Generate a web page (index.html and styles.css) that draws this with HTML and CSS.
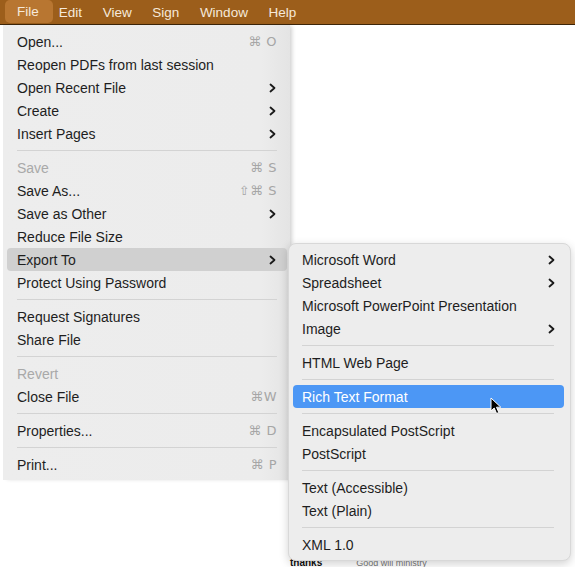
FILE: index.html
```html
<!DOCTYPE html>
<html>
<head>
<meta charset="utf-8">
<link rel="stylesheet" href="styles.css">
</head>
<body>
<div class="menubar">
  <span class="mb-item active">File</span>
  <span class="mb-item">Edit</span>
  <span class="mb-item">View</span>
  <span class="mb-item">Sign</span>
  <span class="mb-item">Window</span>
  <span class="mb-item">Help</span>
</div>
<div class="stage">
  <div class="doc">
    <span class="doc-big">thanks</span>
    <span class="doc-small">Good will ministry</span>
  </div>

  <div class="menu main">
    <div class="row"><span>Open...</span><span class="sc">⌘ O</span></div>
    <div class="row"><span>Reopen PDFs from last session</span></div>
    <div class="row"><span>Open Recent File</span><svg class="chev" viewBox="0 0 7 10"><polyline points="1.5,1.5 5.5,5 1.5,8.5"/></svg></div>
    <div class="row"><span>Create</span><svg class="chev" viewBox="0 0 7 10"><polyline points="1.5,1.5 5.5,5 1.5,8.5"/></svg></div>
    <div class="row"><span>Insert Pages</span><svg class="chev" viewBox="0 0 7 10"><polyline points="1.5,1.5 5.5,5 1.5,8.5"/></svg></div>
    <div class="sep"></div>
    <div class="row dis"><span>Save</span><span class="sc">⌘ S</span></div>
    <div class="row"><span>Save As...</span><span class="sc">⇧⌘ S</span></div>
    <div class="row"><span>Save as Other</span><svg class="chev" viewBox="0 0 7 10"><polyline points="1.5,1.5 5.5,5 1.5,8.5"/></svg></div>
    <div class="row"><span>Reduce File Size</span></div>
    <div class="row hover"><span>Export To</span><svg class="chev" viewBox="0 0 7 10"><polyline points="1.5,1.5 5.5,5 1.5,8.5"/></svg></div>
    <div class="row"><span>Protect Using Password</span></div>
    <div class="sep"></div>
    <div class="row"><span>Request Signatures</span></div>
    <div class="row"><span>Share File</span></div>
    <div class="sep"></div>
    <div class="row dis"><span>Revert</span></div>
    <div class="row"><span>Close File</span><span class="sc">⌘W</span></div>
    <div class="sep"></div>
    <div class="row"><span>Properties...</span><span class="sc">⌘ D</span></div>
    <div class="sep"></div>
    <div class="row"><span>Print...</span><span class="sc">⌘ P</span></div>
  </div>

  <div class="menu sub">
    <div class="row"><span>Microsoft Word</span><svg class="chev" viewBox="0 0 7 10"><polyline points="1.5,1.5 5.5,5 1.5,8.5"/></svg></div>
    <div class="row"><span>Spreadsheet</span><svg class="chev" viewBox="0 0 7 10"><polyline points="1.5,1.5 5.5,5 1.5,8.5"/></svg></div>
    <div class="row"><span>Microsoft PowerPoint Presentation</span></div>
    <div class="row"><span>Image</span><svg class="chev" viewBox="0 0 7 10"><polyline points="1.5,1.5 5.5,5 1.5,8.5"/></svg></div>
    <div class="sep"></div>
    <div class="row"><span>HTML Web Page</span></div>
    <div class="sep"></div>
    <div class="row sel"><span>Rich Text Format</span>
      <svg class="cursor" viewBox="0 0 12 18"><path d="M1 1 L1 14 L4.2 11 L6.6 16.5 L8.8 15.5 L6.5 10.2 L10.8 10.2 Z" fill="#000" stroke="#fff" stroke-width="1"/></svg>
    </div>
    <div class="sep"></div>
    <div class="row"><span>Encapsulated PostScript</span></div>
    <div class="row"><span>PostScript</span></div>
    <div class="sep"></div>
    <div class="row"><span>Text (Accessible)</span></div>
    <div class="row"><span>Text (Plain)</span></div>
    <div class="sep"></div>
    <div class="row"><span>XML 1.0</span></div>
  </div>
</div>
</body>
</html>
```
FILE: styles.css
```css
* { box-sizing: border-box; }
html, body { margin: 0; padding: 0; background: #fff; }
body {
  width: 575px;
  height: 567px;
  overflow: hidden;
  font-family: "Liberation Sans", Arial, sans-serif;
  font-size: 14px;
  color: #1e1e1e;
}
.menubar {
  height: 25px;
  background: #9c5e1b;
  border-bottom: 1px solid #3e2508;
  display: flex;
  align-items: stretch;
  padding-left: 5px;
}
.mb-item {
  display: flex;
  align-items: center;
  padding: 0 10.3px;
  color: #f6e9da;
  font-size: 13.5px;
}
.mb-item.active {
  background: #b87631;
  border-radius: 5px;
  padding: 0 14px 0 12px;
  height: 23px;
}
.mb-item.active + .mb-item { padding-left: 6px; }
.stage {
  position: relative;
  height: 542px;
}
.doc {
  position: absolute;
  left: 290px;
  bottom: 0;
  width: 285px;
  height: 12px;
  line-height: 12px;
  white-space: nowrap;
}
.doc-big { font-size: 10px; font-weight: bold; color: #111; }
.doc-small { font-size: 9px; color: #777; margin-left: 30px; }

.menu {
  position: absolute;
  background: #ececec;
  display: flex;
  flex-direction: column;
}
.main {
  left: 3px;
  top: 0;
  width: 287px;
  height: 455px;
  padding: 5px 3px 4px 4px;
  box-shadow: 3px 0 4px -1px rgba(0,0,0,0.18);
  background: linear-gradient(to right, #ededed 0%, #ececec 90%, #e4e4e4 100%);
}
.sub {
  left: 288px;
  top: 218px;
  width: 283px;
  height: 318px;
  padding: 4px 6px 6px 4px;
  border-radius: 8px;
  border: 1px solid #d8d8d8;
  box-shadow: 0 3px 10px rgba(0,0,0,0.18);
  background: #ededed;
}
.row {
  height: 23px;
  flex: none;
  display: flex;
  align-items: center;
  justify-content: space-between;
  padding: 0 10px;
  border-radius: 4px;
  white-space: nowrap;
  position: relative;
}
.sub .row { padding: 0 8px 0 9px; }
.row.dis { color: #a9a9a9; }
.row.hover { background: #d0d0d0; }
.row.sel { background: #4c97f5; color: #fff; }
.sc { color: #a6a6a6; font-size: 13px; font-family: "DejaVu Sans", "Liberation Sans", sans-serif; letter-spacing: 0.5px; }
.chev { width: 7px; height: 10px; margin-right: 1px; }
.chev polyline { fill: none; stroke: #1a1a1a; stroke-width: 1.8; stroke-linecap: round; stroke-linejoin: round; }
.sep {
  height: 11px;
  flex: none;
  display: flex;
  align-items: center;
  margin: 0 10px;
}
.sub .sep { margin: 0 10px 0 9px; }
.sep::before {
  content: "";
  display: block;
  width: 100%;
  height: 1px;
  background: #d3d3d3;
}
.cursor {
  position: absolute;
  left: 197px;
  top: 12px;
  width: 12px;
  height: 18px;
}
```
